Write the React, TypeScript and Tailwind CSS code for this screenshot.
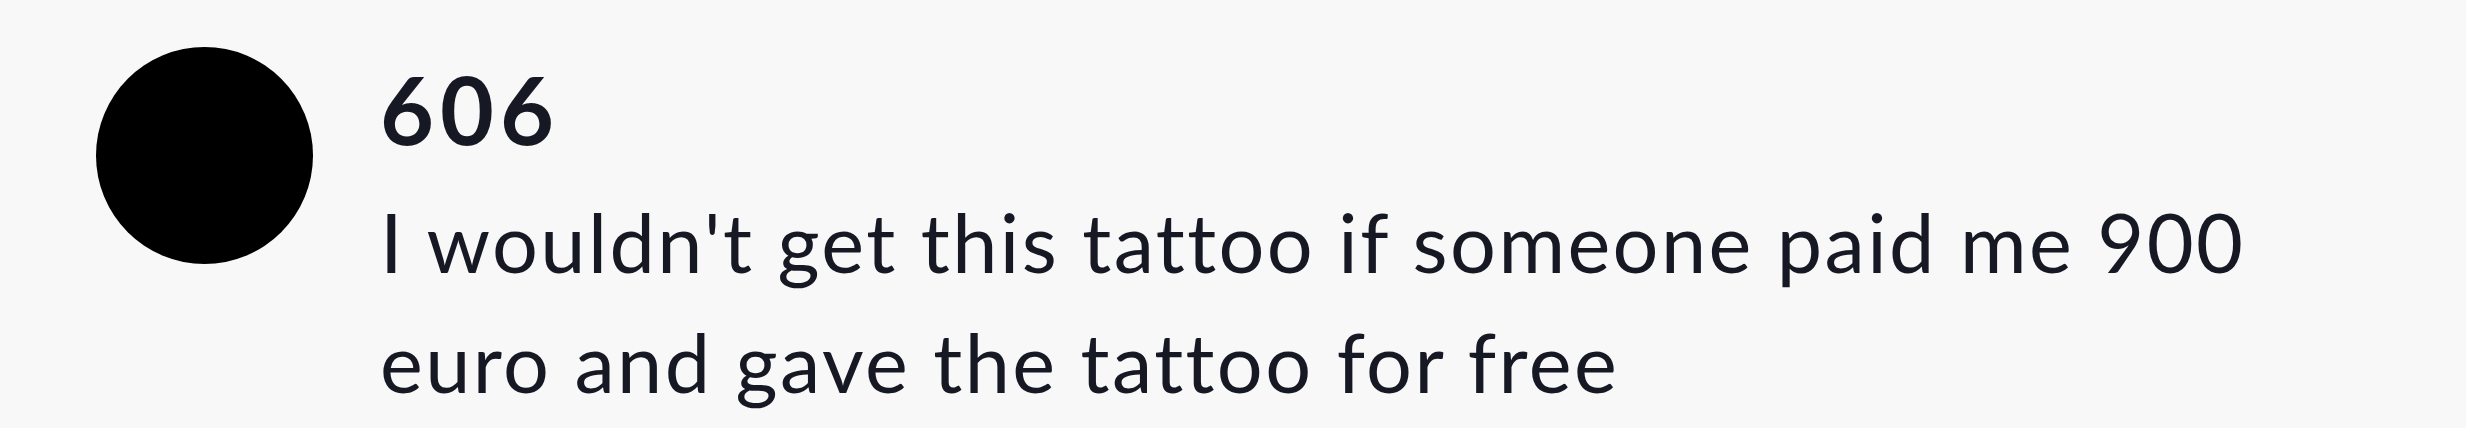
export default function App() {
  return (
    <div className="w-[2466px] h-[428px] bg-[#f8f8f8] flex items-start pl-[96px] pr-[96px] pt-[47px] gap-[67px]" style={{ fontFamily: 'Lato, "Noto Sans", sans-serif' }}>
      {/* avatar */}
      <div className="w-[217px] h-[217px] rounded-full bg-black shrink-0" />

      {/* comment */}
      <div className="flex flex-col pt-[7px] text-[#161823] min-w-0 flex-1">
        <div className="text-[93px] leading-[1.2] font-bold tracking-[6px]">606</div>
        <p className="mt-[16px] text-[81px] leading-[120px] font-normal tracking-[2.4px]">
          I wouldn't get this tattoo if someone paid me 900 euro and gave the tattoo for free
        </p>
      </div>
    </div>
  );
}
